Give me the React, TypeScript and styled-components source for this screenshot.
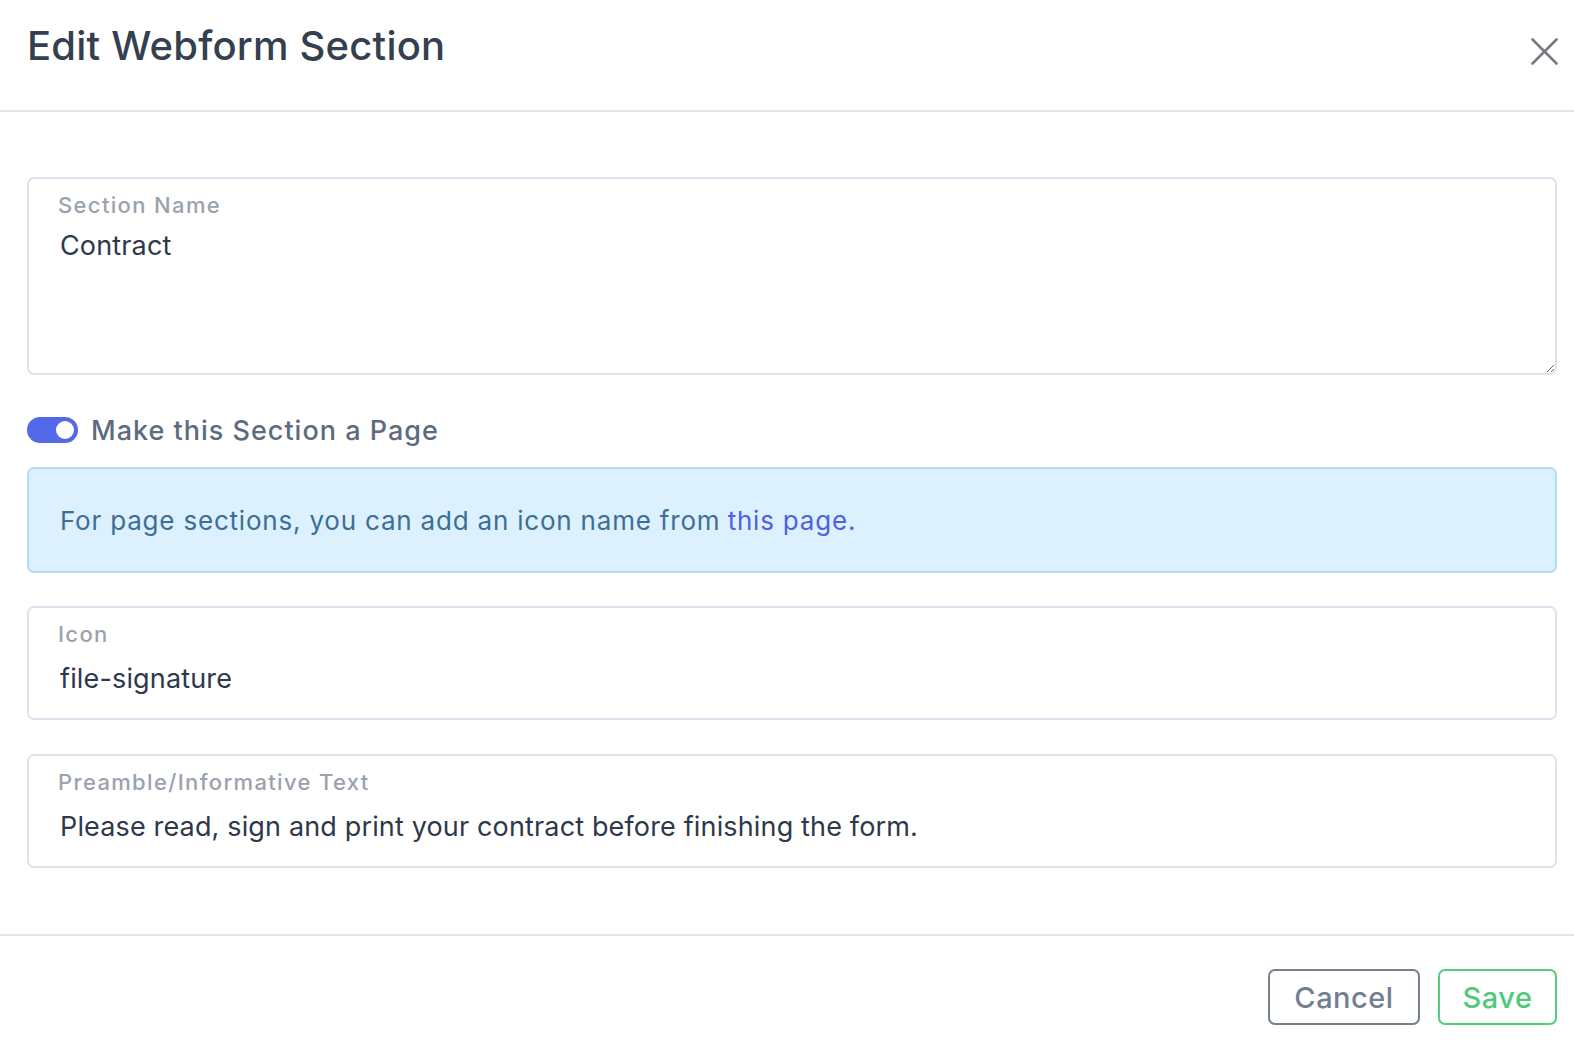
import styled, { createGlobalStyle } from "styled-components";

const GlobalStyle = createGlobalStyle`
  html, body {
    margin: 0;
    padding: 0;
    background: #ffffff;
  }
  body {
    font-family: Inter, "Open Sans", sans-serif;
    -webkit-font-smoothing: antialiased;
  }
`;

const Dialog = styled.div`
  width: 1574px;
  height: 1044px;
  display: flex;
  flex-direction: column;
  box-sizing: border-box;
  background: #fff;
`;

const Header = styled.div`
  height: 112px;
  box-sizing: border-box;
  display: flex;
  align-items: flex-start;
  justify-content: space-between;
  padding: 21px 16px 0 27px;
  border-bottom: 2px solid #dde5ef;
`;

const Title = styled.h2`
  margin: 0;
  font-size: 40px;
  font-weight: 500;
  color: #343f50;
  line-height: 50px;
  letter-spacing: 0.2px;
`;

const CloseButton = styled.button`
  border: 0;
  background: none;
  padding: 0;
  margin-top: 17px;
  width: 27px;
  height: 27px;
  cursor: pointer;
  svg {
    display: block;
  }
`;

const Body = styled.div`
  flex: 1;
  display: flex;
  flex-direction: column;
  padding: 65px 17px 0 27px;
`;

const FieldBox = styled.label<{ $height: number }>`
  display: flex;
  flex-direction: column;
  height: ${(p) => p.$height}px;
  box-sizing: border-box;
  border: 2px solid #dbe3ee;
  border-radius: 7px;
  overflow: hidden;
  margin-bottom: ${(p) => (p.$height > 150 ? 40 : 34)}px;
`;

const FieldLabel = styled.span`
  padding: 11px 0 0 29px;
  font-size: 22px;
  font-weight: 500;
  color: #9aa2ae;
  line-height: 30px;
  letter-spacing: 1.35px;
`;

const TextInput = styled.input`
  border: 0;
  outline: none;
  background: transparent;
  padding: 11px 0 0 31px;
  font-family: inherit;
  font-size: 27px;
  color: #2d394a;
  line-height: 38px;
  letter-spacing: 0.15px;
`;

const TextArea = styled.textarea`
  flex: 1;
  border: 0;
  outline: none;
  background: transparent;
  padding: 7px 0 0 31px;
  font-family: inherit;
  font-size: 27px;
  color: #2d394a;
  line-height: 38px;
  letter-spacing: 0.15px;
  resize: vertical;
`;

const ToggleRow = styled.div`
  display: flex;
  align-items: center;
  gap: 13px;
  height: 30px;
  margin-bottom: 22px;
`;

const Switch = styled.span<{ $on: boolean }>`
  position: relative;
  width: 51px;
  height: 26px;
  border-radius: 13px;
  background: ${(p) => (p.$on ? "#5468ea" : "#cbd3de")};
  flex-shrink: 0;
  &::after {
    content: "";
    position: absolute;
    top: 4px;
    left: ${(p) => (p.$on ? "29px" : "4px")};
    width: 18px;
    height: 18px;
    border-radius: 50%;
    background: #fff;
  }
`;

const ToggleLabel = styled.span`
  font-size: 27px;
  font-weight: 500;
  color: #5e6b7f;
  letter-spacing: 1px;
`;

const InfoBox = styled.div`
  height: 106px;
  box-sizing: border-box;
  display: flex;
  align-items: center;
  padding: 0 31px;
  background: #ddf0fd;
  border: 2px solid #b3def6;
  border-radius: 7px;
  font-size: 26px;
  letter-spacing: 0.8px;
  color: #3b6f98;
  margin-bottom: 33px;
`;

const InfoLink = styled.a`
  color: #4e62df;
  text-decoration: none;
  margin-left: 0.28em;
`;

const Footer = styled.div`
  display: flex;
  justify-content: flex-end;
  gap: 18px;
  padding: 33px 17px 0 0;
  height: 110px;
  box-sizing: border-box;
  border-top: 2px solid #dde5ef;
`;

const Button = styled.button<{ $tone: "neutral" | "success" }>`
  height: 56px;
  box-sizing: border-box;
  padding: 0;
  width: ${(p) => (p.$tone === "success" ? 119 : 152)}px;
  border-radius: 7px;
  background: #fff;
  font-family: inherit;
  font-size: 29px;
  font-weight: 500;
  letter-spacing: 0.5px;
  border: 2px solid ${(p) => (p.$tone === "success" ? "#56cc7e" : "#747f8f")};
  color: ${(p) => (p.$tone === "success" ? "#52c97a" : "#737f90")};
  cursor: pointer;
`;

function CloseIcon() {
  return (
    <svg width="27" height="27" viewBox="0 0 27 27">
      <path
        d="M1.5 1.5 L25.5 25.5 M25.5 1.5 L1.5 25.5"
        stroke="#777b80"
        strokeWidth="2.6"
        strokeLinecap="round"
      />
    </svg>
  );
}

export default function App() {
  return (
    <>
      <GlobalStyle />
      <Dialog>
        <Header>
          <Title>Edit Webform Section</Title>
          <CloseButton aria-label="Close">
            <CloseIcon />
          </CloseButton>
        </Header>

        <Body>
          <FieldBox $height={198}>
            <FieldLabel>Section Name</FieldLabel>
            <TextArea defaultValue="Contract" />
          </FieldBox>

          <ToggleRow>
            <Switch $on />
            <ToggleLabel>Make this Section a Page</ToggleLabel>
          </ToggleRow>

          <InfoBox>
            For page sections, you can add an icon name from
            <InfoLink href="#">this page.</InfoLink>
          </InfoBox>

          <FieldBox $height={114}>
            <FieldLabel>Icon</FieldLabel>
            <TextInput defaultValue="file-signature" />
          </FieldBox>

          <FieldBox $height={114}>
            <FieldLabel>Preamble/Informative Text</FieldLabel>
            <TextInput defaultValue="Please read, sign and print your contract before finishing the form." />
          </FieldBox>
        </Body>

        <Footer>
          <Button $tone="neutral">Cancel</Button>
          <Button $tone="success">Save</Button>
        </Footer>
      </Dialog>
    </>
  );
}
